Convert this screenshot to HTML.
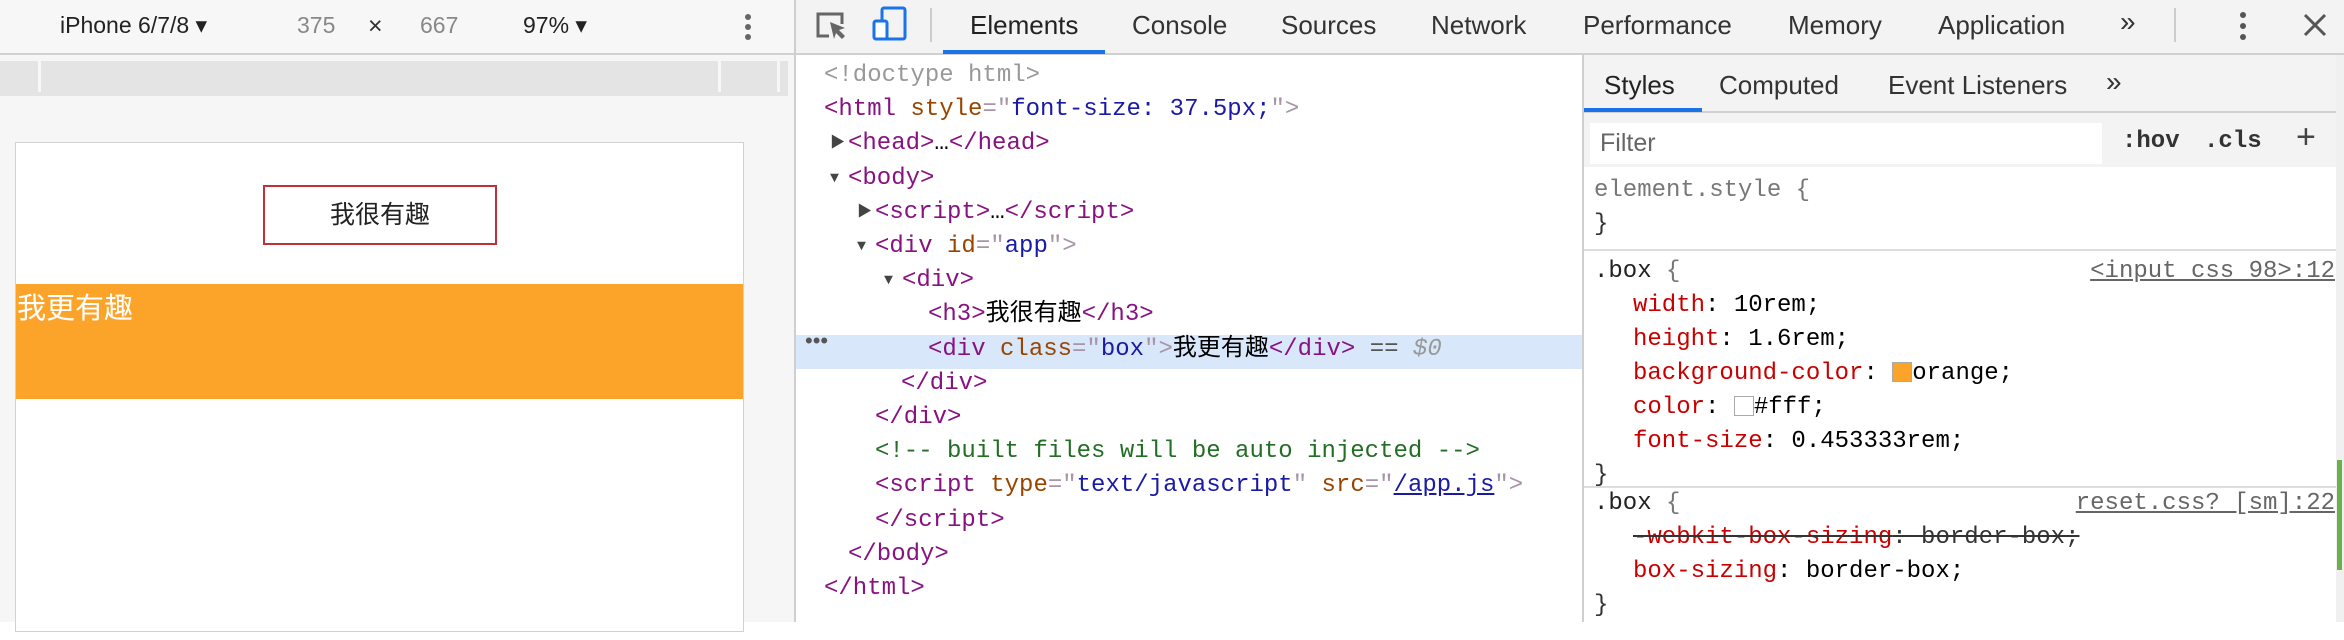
<!DOCTYPE html>
<html><head><meta charset="utf-8"><style>
*{margin:0;padding:0;box-sizing:border-box}
body{width:2344px;height:622px;overflow:hidden;background:#fff;position:relative;font-family:"Liberation Sans","Noto Sans CJK SC",sans-serif;}
.a{position:absolute;white-space:pre}
.mono{font-family:"Liberation Mono","Noto Sans CJK SC",monospace;font-size:24px}
.tg{color:#881280}.br{color:#a894a6}.an{color:#994500}.av{color:#1a1aa6}.cm{color:#236e25}.pr{color:#c80000}.gr{color:#999}
.ar{display:inline-block;width:18px;color:#444;font-size:15px;vertical-align:2px}
</style></head><body>
<!-- left panel -->
<div class="a" style="left:0;top:0;width:794px;height:622px;background:#f6f6f6"></div>
<div class="a" style="left:0;top:0;width:794px;height:55px;background:#f7f7f7;border-bottom:2px solid #d0d0d0"></div>
<div class="a" style="left:60px;top:12px;font-size:23px;color:#222">iPhone 6/7/8 ▾</div>
<div class="a" style="left:297px;top:12px;font-size:23px;color:#888">375</div>
<div class="a" style="left:368px;top:12px;font-size:25px;color:#333">×</div>
<div class="a" style="left:420px;top:12px;font-size:23px;color:#888">667</div>
<div class="a" style="left:523px;top:12px;font-size:23px;color:#222">97% ▾</div>
<svg class="a" style="left:742px;top:12px" width="12" height="30"><circle cx="6" cy="5" r="3" fill="#666"/><circle cx="6" cy="15" r="3" fill="#666"/><circle cx="6" cy="25" r="3" fill="#666"/></svg>
<div class="a" style="left:0;top:61px;width:788px;height:35px;background:#e4e4e4"></div>
<div class="a" style="left:38px;top:61px;width:3px;height:31px;background:#f7f7f7"></div>
<div class="a" style="left:718px;top:61px;width:3px;height:31px;background:#f7f7f7"></div>
<div class="a" style="left:777px;top:61px;width:3px;height:31px;background:#f7f7f7"></div>
<div class="a" style="left:15px;top:142px;width:729px;height:490px;background:#fff;border:1px solid #d2d2d2"></div>
<div class="a" style="left:263px;top:185px;width:234px;height:60px;border:2px solid #c0303a;font-size:25px;color:#222;text-align:center;line-height:56px">我很有趣</div>
<div class="a" style="left:16px;top:284px;width:727px;height:115px;background:#fca42a;color:#fff;font-size:29px;line-height:50px;padding-left:1px">我更有趣</div>
<div class="a" style="left:794px;top:0;width:2px;height:622px;background:#cfcfcf"></div>

<!-- devtools top bar -->
<div class="a" style="left:796px;top:0;width:1548px;height:55px;background:#f3f3f3;border-bottom:2px solid #d0d0d0"></div>
<svg class="a" style="left:814px;top:10px" width="36" height="32"><path d="M15 26H4V4h24v10" fill="none" stroke="#666" stroke-width="3"/><path d="M16 12l15 6-6 2 6 6-3 3-6-6-2 6z" fill="#666"/></svg>
<svg class="a" style="left:872px;top:6px" width="36" height="36"><rect x="10" y="2" width="23" height="31" rx="2" fill="none" stroke="#1a73e8" stroke-width="3"/><rect x="2" y="15" width="13" height="18" rx="2" fill="#fff" stroke="#1a73e8" stroke-width="3"/></svg>
<div class="a" style="left:930px;top:8px;width:2px;height:34px;background:#ccc"></div>
<div class="a" style="left:970px;top:10px;font-size:26px;color:#222">Elements</div>
<div class="a" style="left:943px;top:50px;width:162px;height:4px;background:#1a73e8"></div>
<div class="a" style="left:1132px;top:10px;font-size:26px;color:#333">Console</div>
<div class="a" style="left:1281px;top:10px;font-size:26px;color:#333">Sources</div>
<div class="a" style="left:1431px;top:10px;font-size:26px;color:#333">Network</div>
<div class="a" style="left:1583px;top:10px;font-size:26px;color:#333">Performance</div>
<div class="a" style="left:1788px;top:10px;font-size:26px;color:#333">Memory</div>
<div class="a" style="left:1938px;top:10px;font-size:26px;color:#333">Application</div>
<div class="a" style="left:2120px;top:6px;font-size:28px;color:#333">»</div>
<div class="a" style="left:2174px;top:8px;width:2px;height:34px;background:#ccc"></div>
<svg class="a" style="left:2237px;top:10px" width="12" height="32"><circle cx="6" cy="5" r="3" fill="#555"/><circle cx="6" cy="16" r="3" fill="#555"/><circle cx="6" cy="27" r="3" fill="#555"/></svg>
<svg class="a" style="left:2302px;top:12px" width="26" height="26"><path d="M3 3L23 23M23 3L3 23" stroke="#555" stroke-width="3"/></svg>

<!-- elements tree -->
<div class="a" style="left:796px;top:335px;width:786px;height:34px;background:#d8e7fa"></div>
<div class="a" style="left:805px;top:328px;font-size:22px;color:#555">•••</div>
<div class="a mono" style="left:0;top:59px;line-height:34.2px">
<div class="a gr" style="left:824px;top:0">&lt;!doctype html&gt;</div>
<div class="a" style="left:824px;top:34.2px"><span class="tg">&lt;html</span> <span class="an">style</span><span class="br">="</span><span class="av">font-size: 37.5px;</span><span class="br">"&gt;</span></div>
<div class="a" style="left:830px;top:68.4px"><span class="ar">▶</span><span class="tg">&lt;head&gt;</span>…<span class="tg">&lt;/head&gt;</span></div>
<div class="a" style="left:830px;top:102.6px"><span class="ar">▼</span><span class="tg">&lt;body&gt;</span></div>
<div class="a" style="left:857px;top:136.8px"><span class="ar">▶</span><span class="tg">&lt;script&gt;</span>…<span class="tg">&lt;/script&gt;</span></div>
<div class="a" style="left:857px;top:171px"><span class="ar">▼</span><span class="tg">&lt;div</span> <span class="an">id</span><span class="br">="</span><span class="av">app</span><span class="br">"&gt;</span></div>
<div class="a" style="left:884px;top:205.2px"><span class="ar">▼</span><span class="tg">&lt;div&gt;</span></div>
<div class="a" style="left:928px;top:239.4px"><span class="tg">&lt;h3&gt;</span>我很有趣<span class="tg">&lt;/h3&gt;</span></div>
<div class="a" style="left:928px;top:273.6px"><span class="tg">&lt;div</span> <span class="an">class</span><span class="br">="</span><span class="av">box</span><span class="br">"&gt;</span>我更有趣<span class="tg">&lt;/div&gt;</span> <span style="color:#555">==</span> <i class="gr">$0</i></div>
<div class="a" style="left:901px;top:307.8px"><span class="tg">&lt;/div&gt;</span></div>
<div class="a" style="left:875px;top:342px"><span class="tg">&lt;/div&gt;</span></div>
<div class="a cm" style="left:875px;top:376.2px">&lt;!-- built files will be auto injected --&gt;</div>
<div class="a" style="left:875px;top:410.4px"><span class="tg">&lt;script</span> <span class="an">type</span><span class="br">="</span><span class="av">text/javascript</span><span class="br">"</span> <span class="an">src</span><span class="br">="</span><span style="color:#1a1aa6;text-decoration:underline">/app.js</span><span class="br">"&gt;</span></div>
<div class="a" style="left:875px;top:444.6px"><span class="tg">&lt;/script&gt;</span></div>
<div class="a" style="left:848px;top:478.8px"><span class="tg">&lt;/body&gt;</span></div>
<div class="a" style="left:824px;top:513px"><span class="tg">&lt;/html&gt;</span></div>
</div>

<!-- styles pane -->
<div class="a" style="left:1582px;top:55px;width:2px;height:567px;background:#cfcfcf"></div>
<div class="a" style="left:1584px;top:55px;width:760px;height:112px;background:#f3f3f3"></div>
<div class="a" style="left:1584px;top:111px;width:752px;height:2px;background:#d0d0d0"></div>
<div class="a" style="left:1604px;top:70px;font-size:26px;color:#222">Styles</div>
<div class="a" style="left:1584px;top:108px;width:118px;height:4px;background:#1a73e8"></div>
<div class="a" style="left:1719px;top:70px;font-size:26px;color:#333">Computed</div>
<div class="a" style="left:1888px;top:70px;font-size:26px;color:#333">Event Listeners</div>
<div class="a" style="left:2106px;top:66px;font-size:28px;color:#333">»</div>
<div class="a" style="left:1590px;top:123px;width:512px;height:41px;background:#fff"></div>
<div class="a" style="left:1600px;top:129px;font-size:25px;color:#666">Filter</div>
<div class="a mono" style="left:2122px;top:128px;font-weight:bold;color:#333">:hov</div>
<div class="a mono" style="left:2204px;top:128px;font-weight:bold;color:#333">.cls</div>
<div class="a" style="left:2296px;top:118px;font-size:34px;color:#444">+</div>
<div class="a" style="left:2336px;top:55px;width:8px;height:567px;background:#f0f0f0"></div>
<div class="a" style="left:2337px;top:460px;width:5px;height:110px;background:#6cb04a"></div>
<div class="a" style="left:1584px;top:249px;width:752px;height:2px;background:#ddd"></div>
<div class="a" style="left:1584px;top:486px;width:752px;height:2px;background:#ddd"></div>
<div class="a mono" style="left:0;top:0;line-height:34px">
<div class="a gr" style="left:1594px;top:174px;color:#777">element.style {</div>
<div class="a" style="left:1594px;top:208px;color:#333">}</div>
<div class="a" style="left:1594px;top:255px;color:#222">.box <span style="color:#777">{</span></div>
<div class="a" style="left:1925px;top:255px;width:410px;text-align:right;color:#666;text-decoration:underline">&lt;input css 98&gt;:12</div>
<div class="a" style="left:1633px;top:289px"><span class="pr">width</span>: 10rem;</div>
<div class="a" style="left:1633px;top:323px"><span class="pr">height</span>: 1.6rem;</div>
<div class="a" style="left:1633px;top:357px"><span class="pr">background-color</span>: <span style="display:inline-block;width:20px;height:20px;background:#fca42a;border:1px solid #aaa;vertical-align:-3px"></span>orange;</div>
<div class="a" style="left:1633px;top:391px"><span class="pr">color</span>: <span style="display:inline-block;width:20px;height:20px;background:#fff;border:1px solid #aaa;vertical-align:-3px"></span>#fff;</div>
<div class="a" style="left:1633px;top:425px"><span class="pr">font-size</span>: 0.453333rem;</div>
<div class="a" style="left:1594px;top:459px;color:#333">}</div>
<div class="a" style="left:1594px;top:487px;color:#222">.box <span style="color:#777">{</span></div>
<div class="a" style="left:1925px;top:487px;width:410px;text-align:right;color:#666;text-decoration:underline">reset.css? [sm]:22</div>
<div class="a" style="left:1633px;top:521px;text-decoration:line-through;color:#333"><span class="pr">-webkit-box-sizing</span>: border-box;</div>
<div class="a" style="left:1633px;top:555px"><span class="pr">box-sizing</span>: border-box;</div>
<div class="a" style="left:1594px;top:589px;color:#333">}</div>
</div>
</body></html>
